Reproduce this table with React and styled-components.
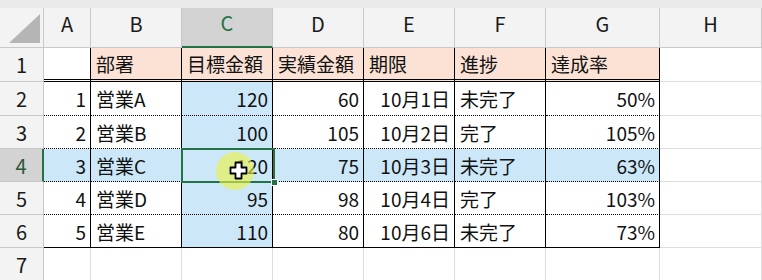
import React from "react";
import styled, { createGlobalStyle } from "styled-components";

const GlobalStyle = createGlobalStyle`
  html, body { margin: 0; padding: 0; background: #ffffff; }
  body { font-family: "Noto Sans CJK JP", "Noto Sans", sans-serif; }
`;

const GRID = "#dedede";
const HEAD_LINE = "#c8c8c8";
const GREEN = "#217346";
const PINK = "#fbe2d5";
const BLUE = "#cce8f8";

const Sheet = styled.div`
  position: relative;
  display: grid;
  grid-template-columns: 44px 47px repeat(5, 91px) 114px 102px;
  grid-template-rows: 8px 40px 34px 34px 33px 33px 33px 33px 33px;
  width: 762px;
  height: 280px;
  overflow: hidden;
  color: #111;
  font-size: 19px;
`;

const TopStrip = styled.div`
  grid-column: 1 / -1;
  background: #eaeaea;
`;

const Corner = styled.div`
  position: relative;
  background: #f3f3f3;
  border-right: 1px solid ${HEAD_LINE};
  border-bottom: 1px solid ${HEAD_LINE};
  box-sizing: border-box;
`;

const Triangle = styled.div`
  position: absolute;
  right: 3px;
  bottom: 4px;
  width: 31px;
  height: 29px;
  background: #b5b5b5;
  clip-path: polygon(100% 0, 100% 100%, 0 100%);
`;

const ColHeader = styled.div`
  box-sizing: border-box;
  display: flex;
  align-items: center;
  justify-content: center;
  padding-bottom: 9px;
  background: ${(p) => (p.$selected ? "#d3d3d3" : "#f3f3f3")};
  color: ${(p) => (p.$selected ? GREEN : "#1a1a1a")};
  border-right: 1px solid ${HEAD_LINE};
  border-bottom: ${(p) => (p.$selected ? `2px solid ${GREEN}` : `1px solid ${HEAD_LINE}`)};
  font-size: 20px;
`;

const RowHeader = styled.div`
  box-sizing: border-box;
  display: flex;
  align-items: center;
  justify-content: center;
  background: ${(p) => (p.$selected ? "#d3d3d3" : "#f3f3f3")};
  color: ${(p) => (p.$selected ? "#2b5a3a" : "#1a1a1a")};
  border-right: ${(p) => (p.$selected ? `2px solid ${GREEN}` : `1px solid ${HEAD_LINE}`)};
  border-bottom: 1px solid ${HEAD_LINE};
  font-size: 20px;
`;

const bottomBorder = {
  double: "3px double #000",
  dotted: "1px dotted #000",
  solid: "1px solid #000",
  grid: `1px solid ${GRID}`,
};

const Cell = styled.div`
  box-sizing: border-box;
  display: flex;
  align-items: center;
  justify-content: ${(p) => (p.$align === "right" ? "flex-end" : "flex-start")};
  padding: 0 4px 0 5px;
  white-space: nowrap;
  background: ${(p) => p.$bg || "#ffffff"};
  border-right: 1px solid ${(p) => (p.$table ? "#000" : GRID)};
  border-bottom: ${(p) => bottomBorder[p.$bottom || "grid"]};
`;

const ActiveBox = styled.div`
  position: absolute;
  left: 181px;
  top: 148px;
  width: 94px;
  height: 35px;
  box-sizing: border-box;
  border: 2px solid ${GREEN};
  pointer-events: none;
`;

const FillHandle = styled.div`
  position: absolute;
  left: 271px;
  top: 179px;
  width: 7px;
  height: 7px;
  box-sizing: border-box;
  background: ${GREEN};
  border: 1px solid #ffffff;
`;

const Spot = styled.div`
  position: absolute;
  left: 216px;
  top: 152px;
  width: 38px;
  height: 38px;
  border-radius: 50%;
  background: rgba(236, 242, 70, 0.62);
  pointer-events: none;
`;

const CursorWrap = styled.div`
  position: absolute;
  left: 229px;
  top: 161px;
  width: 19px;
  height: 19px;
  line-height: 0;
`;

const aligns = ["right", "left", "right", "right", "right", "left", "right"];

const header = ["", "部署", "目標金額", "実績金額", "期限", "進捗", "達成率"];
const rows = [
  ["1", "営業A", "120", "60", "10月1日", "未完了", "50%"],
  ["2", "営業B", "100", "105", "10月2日", "完了", "105%"],
  ["3", "営業C", "120", "75", "10月3日", "未完了", "63%"],
  ["4", "営業D", "95", "98", "10月4日", "完了", "103%"],
  ["5", "営業E", "110", "80", "10月6日", "未完了", "73%"],
];

const cols = ["A", "B", "C", "D", "E", "F", "G", "H"];

export default function App() {
  return (
    <>
      <GlobalStyle />
      <Sheet>
        <TopStrip />
        <Corner>
          <Triangle />
        </Corner>
        {cols.map((c) => (
          <ColHeader key={c} $selected={c === "C"}>
            {c}
          </ColHeader>
        ))}

        <RowHeader>1</RowHeader>
        {header.map((t, i) => (
          <Cell key={"h" + i} $table $bottom="double" $bg={i === 0 ? "#fff" : PINK}>
            {t}
          </Cell>
        ))}
        <Cell />

        {rows.map((r, ri) => {
          const rowNum = ri + 2;
          const sel = rowNum === 4;
          return (
            <React.Fragment key={rowNum}>
              <RowHeader $selected={sel}>{rowNum}</RowHeader>
              {r.map((t, ci) => (
                <Cell
                  key={ci}
                  $table
                  $align={aligns[ci]}
                  $bottom={ri === rows.length - 1 ? "solid" : "dotted"}
                  $bg={sel || ci === 2 ? BLUE : "#fff"}
                >
                  {t}
                </Cell>
              ))}
              <Cell />
            </React.Fragment>
          );
        })}

        <RowHeader>7</RowHeader>
        {cols.map((c) => (
          <Cell key={"r7" + c} />
        ))}

        <ActiveBox />
        <FillHandle />
        <Spot />
        <CursorWrap>
          <svg width="19" height="19" viewBox="0 0 19 19">
            <path
              d="M6.5 1.5 H12.5 V6.5 H17.5 V12.5 H12.5 V17.5 H6.5 V12.5 H1.5 V6.5 H6.5 Z"
              fill="#ffffff"
              stroke="#000000"
              strokeWidth="1.8"
              strokeLinejoin="round"
            />
          </svg>
        </CursorWrap>
      </Sheet>
    </>
  );
}
